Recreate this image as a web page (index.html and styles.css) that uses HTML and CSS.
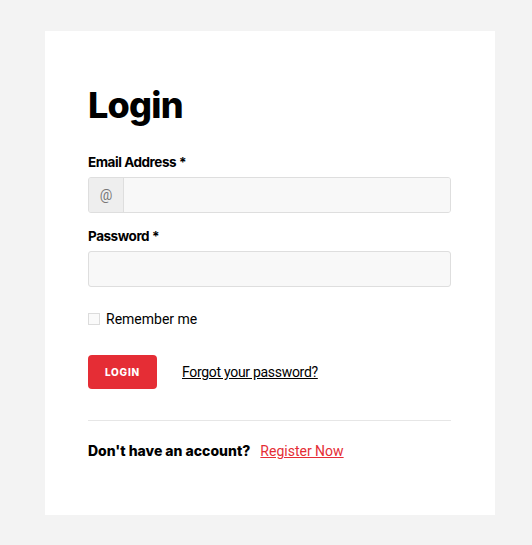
FILE: index.html
```html
<!DOCTYPE html>
<html>
<head>
<meta charset="utf-8">
<link rel="stylesheet" href="styles.css">
</head>
<body>
<div class="card">
  <h1 class="title">Login</h1>
  <form class="form">
    <div class="field">
      <label class="label">Email Address *</label>
      <div class="input-group">
        <span class="addon">@</span>
        <input class="input input-flat" type="text">
      </div>
    </div>
    <div class="field">
      <label class="label">Password *</label>
      <input class="input" type="password">
    </div>
    <label class="remember">
      <span class="checkbox"></span>
      <span class="remember-text">Remember me</span>
    </label>
    <div class="actions">
      <button class="btn" type="button">LOGIN</button>
      <a class="forgot" href="#">Forgot your password?</a>
    </div>
  </form>
  <hr class="divider">
  <p class="register"><strong>Don't have an account?</strong><a class="register-link" href="#">Register Now</a></p>
</div>
</body>
</html>
```

FILE: styles.css
```css
html, body {
  margin: 0;
  padding: 0;
}
body {
  background: #f3f3f3;
  font-family: Inter, "Noto Sans", sans-serif;
  color: #000;
}
.card {
  box-sizing: border-box;
  margin: 31px 0 0 45px;
  width: 450px;
  height: 484px;
  background: #fff;
  padding: 53px 44px 0 43px;
}
.title {
  margin: 0;
  font-size: 36px;
  font-weight: 800;
  letter-spacing: -0.8px;
  line-height: 43px;
}
.form {
  display: flex;
  flex-direction: column;
  margin-top: 26px;
}
.field {
  display: flex;
  flex-direction: column;
}
.field + .field {
  margin-top: 14px;
}
.label {
  font-size: 13.5px;
  font-weight: 700;
  letter-spacing: -0.45px;
  line-height: 18px;
  margin-bottom: 6px;
}
.input-group {
  display: flex;
  height: 36px;
  border: 1px solid #dedede;
  border-radius: 3px;
  box-sizing: border-box;
  overflow: hidden;
  background: #f8f8f8;
}
.addon {
  width: 34px;
  flex: none;
  display: flex;
  align-items: center;
  justify-content: center;
  background: #eeeeee;
  border-right: 1px solid #dedede;
  color: #777;
  font-family: Roboto, sans-serif;
  font-size: 14px;
}
.input {
  box-sizing: border-box;
  height: 36px;
  border: 1px solid #dedede;
  border-radius: 3px;
  background: #f8f8f8;
  outline: none;
  padding: 0 10px;
  font-family: inherit;
}
.input-flat {
  flex: 1;
  border: 0;
  border-radius: 0;
  height: 34px;
}
.remember {
  display: flex;
  align-items: center;
  gap: 6px;
  margin-top: 24px;
  font-family: Roboto, sans-serif;
  font-size: 14px;
  line-height: 16px;
}
.checkbox {
  width: 10px;
  height: 10px;
  border: 1px solid #dcdcdc;
  background: #fafafa;
  flex: none;
}
.actions {
  display: flex;
  align-items: center;
  margin-top: 28px;
  gap: 25px;
}
.btn {
  width: 69px;
  height: 34px;
  border: 0;
  border-radius: 4px;
  background: #e52d35;
  color: #fff;
  font-family: Inter, sans-serif;
  font-size: 10px;
  font-weight: 800;
  letter-spacing: 0.8px;
  padding: 0;
}
.forgot {
  color: #000;
  font-family: Roboto, sans-serif;
  font-size: 14px;
  letter-spacing: -0.3px;
  text-decoration: underline;
}
.divider {
  border: 0;
  border-top: 1px solid #e6e6e6;
  margin: 31px 0 0 0;
}
.register {
  margin: 21px 0 0 0;
  font-size: 14px;
  line-height: 18px;
}
.register strong {
  font-weight: 800;
  letter-spacing: 0;
}
.register-link {
  color: #e52d35;
  margin-left: 10px;
  font-family: Roboto, sans-serif;
  text-decoration: underline;
}
```
